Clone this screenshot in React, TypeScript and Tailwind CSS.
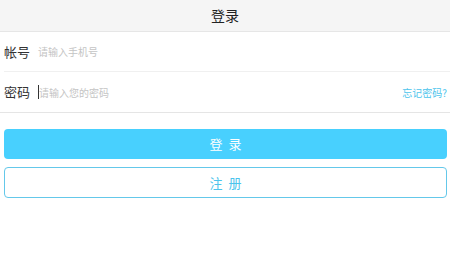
export default function App() {
  return (
    <div
      className="w-[450px] h-[253px] bg-white overflow-hidden"
      style={{ fontFamily: '"Noto Sans CJK SC", "Noto Sans", sans-serif' }}
    >
      {/* Header */}
      <div className="h-[32px] bg-[#f5f5f5] border-b border-[#e6e6e6] flex items-center justify-center">
        <span className="text-[14px] text-[#222]">登录</span>
      </div>

      {/* Form */}
      <div className="border-b border-[#e5e5e5]">
        <div className="ml-[4px] h-[40px] flex items-center border-b border-[#f0f0f0]">
          <span className="w-[34px] text-[13px] text-[#333]">帐号</span>
          <span className="text-[10px] text-[#c4c4c4]">请输入手机号</span>
        </div>
        <div className="pl-[4px] pr-[3px] h-[40px] flex items-center">
          <span className="w-[34px] text-[13px] text-[#333]">密码</span>
          <span className="w-px h-[14px] bg-[#333]"></span>
          <span className="flex-1 text-[10px] text-[#c4c4c4]">请输入您的密码</span>
          <span className="text-[10px] text-[#4cc4ec]">忘记密码?</span>
        </div>
      </div>

      {/* Buttons */}
      <div className="pl-[4px] pr-[3px] pt-[16px] flex flex-col gap-[8px]">
        <button className="h-[30px] rounded-[4px] bg-[#48d0fe] text-white text-[13px] tracking-[6px] pl-[6px]">
          登录
        </button>
        <button className="h-[31px] rounded-[4px] border border-[#64c8ea] bg-white text-[#4cc4ec] text-[13px] tracking-[6px] pl-[6px]">
          注册
        </button>
      </div>
    </div>
  );
}
